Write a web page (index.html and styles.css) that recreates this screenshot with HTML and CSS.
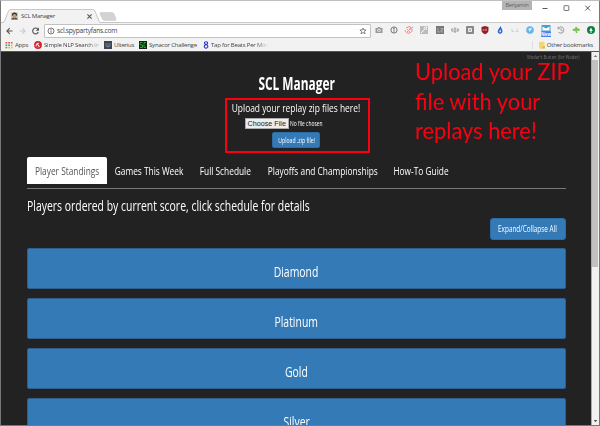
FILE: index.html
```html
<!DOCTYPE html>
<html lang="en">
<head>
<meta charset="utf-8">
<title>SCL Manager</title>
<link rel="stylesheet" href="styles.css">
</head>
<body>
<div class="window">
  <header class="titlebar">
    <div class="tab">
      <svg class="tab-shape" viewBox="0 0 117 14"><path d="M0 13.6H1.500Q3 13.500 3.500 12L7.500 2Q8 .5 10 .5H91.500Q93.500 .5 94 2L98 12Q98.500 13.600 100 13.600H117V14H0Z" fill="#f2f2f2"/><path d="M0 13.500H1.500Q3 13.500 3.500 12L7.500 2Q8 .5 10 .5H91.500Q93.500 .5 94 2L98 12Q98.500 13.500 100 13.500H117" fill="none" stroke="#bbb" stroke-width=".8"/><path d="M99.500 3.500H111Q112.500 3.500 113 5L115 10Q115.300 11.500 114 11.500H103.500Q102 11.500 101.500 10L99 5Q98.700 3.500 99.500 3.500Z" fill="#d3d3d3" stroke="#c2c2c2" stroke-width=".5"/></svg>
      <svg class="favicon" viewBox="0 0 8 8"><path fill="#d0c8b4" d="M0 0h8v8H0z"/><path fill="#3c3027" d="M1 3Q1 0 4 0Q7 0 7 3L6 4L5 2H3L2 4Z"/><path fill="#c79579" d="M2 2.500h4v3L4 7 2 5.500z"/><path fill="#4b4545" d="M0 8Q1 6 3 6L4 7 5 6Q7 6 8 8Z"/></svg>
      <span class="tab-title">SCL Manager</span>
      <svg class="tab-close" viewBox="0 0 6 6"><path d="M1.200 1.200 4.800 4.800M4.800 1.200 1.200 4.800" stroke="#555" stroke-width=".9"/></svg>
    </div>
    <span class="user">Benjamin</span>
    <svg class="controls" viewBox="0 0 66 14"><path d="M10.500 7.500h5M53.300 4.700l4.800 4.800M58.100 4.700l-4.800 4.800" stroke="#444" fill="none" stroke-width=".9"/><rect x="32" y="4.700" width="4.800" height="4.800" rx=".5" stroke="#555" fill="none" stroke-width=".8"/></svg>
  </header>

  <div class="toolbar">
    <svg class="nav" viewBox="0 0 40 14"><g fill="none" stroke-width="1.100"><path d="M11.500 7H6M8.700 4.200 5.900 7l2.800 2.800" stroke="#555"/><path d="M18.500 7H24M21.300 4.200 24.100 7l-2.800 2.800" stroke="#ccc"/><path d="M36.800 5.100A2.900 2.900 0 1 0 37.300 8" stroke="#555"/></g><path d="M38 3.500v3.200h-3.200z" fill="#555"/></svg>
    <div class="omnibox">
      <svg class="info" viewBox="0 0 8 8"><circle cx="4" cy="4" r="3" fill="none" stroke="#555" stroke-width=".8"/><path d="M4 3.500v2.300M4 2v.9" stroke="#555" stroke-width=".9"/></svg>
      <span class="url">scl.spypartyfans.com</span>
      <svg class="star" viewBox="0 0 8 8"><path d="m4 1 .9 2h2.200L5.400 4.500 6 6.800 4 5.500 2 6.800l.6-2.300L.9 3h2.200z" fill="none" stroke="#555" stroke-width=".7"/></svg>
    </div>
    <div class="extensions">
      <svg viewBox="0 0 10 10"><path d="M1.500 3h2l.5-1h2l.5 1h2v5h-7z" fill="#999"/><circle cx="5" cy="5.300" r="1.700" fill="#eee"/><circle cx="5" cy="5.300" r=".9" fill="#999"/></svg>
      <svg viewBox="0 0 10 10"><circle cx="5" cy="5" r="3.100" fill="none" stroke="#777"/><path d="M5 2.500v5M4.200 3.500h1" stroke="#777" stroke-width=".9"/></svg>
      <svg viewBox="0 0 10 10"><path d="M2 3Q5 0 8 3L9 2M1 5Q2 9 6 8M3 4l4 4M7 3 3 7M5 4h3v3" fill="none" stroke="#e69090"/></svg>
      <svg viewBox="0 0 10 10"><path fill="#bbb" d="M1 1h8v8H1z"/><path d="m2 8 4-4M5 3.500a1.700 1.700 0 0 1 3-1L6.800 4 8 4.200" fill="none" stroke="#fff"/></svg>
      <svg viewBox="0 0 10 10"><path fill="#777" d="M1 1h8v8H1z"/><path d="M3 3v4M2.500 7H5M5.500 3.500H8V5H6v2h2" stroke="#bbb" stroke-width=".7" fill="none"/></svg>
      <svg viewBox="0 0 10 10"><path fill="#aaa" d="M1 4 3 3v4L1 6zM3.500 4 5 2l1.500 2v3L5 8 3.500 7zM7 3l2 1v2L7 7z"/><path stroke="#eee" stroke-width=".6" d="M2 5h6"/></svg>
      <svg viewBox="0 0 10 10"><rect x="1" y="1" width="8" height="8" rx="1" fill="#888"/><rect x="3" y="3" width="4" height="4" rx="1" fill="#eee"/><path d="M4.300 4.300h1.500v1.500H4.300z" fill="#888"/></svg>
      <svg viewBox="0 0 10 10"><path fill="#921f25" d="M5 1 8.500 2v3Q8.500 8 5 9.200 1.500 8 1.500 5V2z"/><path d="M3 4v1.500h1V4M5.200 4h1.300v1.500H5.200z" stroke="#e0afaf" stroke-width=".5" fill="none"/></svg>
      <svg viewBox="0 0 10 10"><path fill="#2867d6" d="M5.500 1 7.300 5Q8 8.500 5 8.800 2.200 8.500 2.800 5.500z"/><path fill="#e0edff" d="M5.300 4.500 6 6Q6 7.500 5 7.400 4 7.300 4.400 6z"/></svg>
      <svg viewBox="0 0 10 10"><path d="M2 4v2.500h1.700M5 6.500h.8M7 4v2.500h1.500" fill="none" stroke="#ccc"/></svg>
      <svg viewBox="0 0 10 10"><circle cx="5" cy="5" r="3.800" fill="#5fb4e8"/><path d="m2 4 2 .5.5 2.500 3-4.500-2.700 1z" fill="#e4f4ff"/></svg>
      <svg class="new-badge" viewBox="0 0 10 12"><path fill="#4b9dce" d="M.5 0h9v7h-9z"/><path fill="#fff" d="m1.500 1.500 3.500 2 3.500-2v4h-7z"/><path fill="#4384ee" d="M0 6.500h10V12H0z"/><text x="5" y="10.800" text-anchor="middle">New</text></svg>
      <svg viewBox="0 0 10 10"><path d="M2.200 3.200A3.100 3.100 0 1 1 2.500 7.200M2 1.800v2h2M5 3.200V5l1.500 1" fill="none" stroke="#aaa" stroke-width="1.100"/></svg>
      <svg viewBox="0 0 10 10"><path d="m5 1.500 2 2 2 .5-.7 2-2.500-.3.700 2.300H5l-.8-2.300L2 6 1.500 4l2-.2z" fill="#78c34f"/></svg>
      <svg viewBox="0 0 10 10"><circle cx="5" cy="5" r="4" fill="#0b8043"/><path d="M5 2.500 6.700 6H3.300zM4 6.400h2v1H4z" fill="#fff"/></svg>
    </div>
  </div>

  <nav class="bookmarks">
    <svg class="ic apps" viewBox="0 0 8 8"><path fill="#e35645" d="M.5 1h1.800v1.600H.5zM3.200 1H5v1.600H3.200zM5.900 1h1.600v1.600H5.900z"/><path fill="#4caf50" d="M.5 3.400h1.800V5H.5z"/><path fill="#4b86e8" d="M3.200 3.400H5V5H3.200z"/><path fill="#f2bf30" d="M5.900 3.400h1.600V5H5.900zM3.200 5.800H5v1.600H3.200zM5.900 5.800h1.600v1.600H5.900z"/><path fill="#4caf50" d="M.5 5.800h1.800v1.600H.5z"/></svg><span class="b1">Apps</span>
    <svg class="ic" viewBox="0 0 8 8"><circle cx="4" cy="4" r="3.900" fill="#d2222d"/><path d="M2 5.500Q1.700 2 4.500 2L3.500 4l2 1-1.500 1.500" fill="none" stroke="#fff" stroke-width=".9"/></svg><span class="b2 fade">Simple NLP Search in</span>
    <svg class="ic" viewBox="0 0 8 8"><path fill="#3d4452" d="M0 0h8v8H0z"/><path d="M2 2v3q2 2 4 0V2M4 2v4" fill="none" stroke="#8a95a8" stroke-width=".7"/></svg><span class="b3">Ulterius</span>
    <svg class="ic" viewBox="0 0 8 8"><path fill="#10240f" d="M0 0h8v8H0z"/><path d="M3.500 1.500H1.200V4h2.300v2.500H1M7 1.500H5v5h2" fill="none" stroke="#2ca336"/></svg><span class="b4">Synacor Challenge</span>
    <svg class="ic" viewBox="0 0 8 8"><path d="M4 .8q1.800 0 1.500 1.700L4.500 3.800 3 3 2.500 2Q2.500.8 4 .8M4.500 3.800q2 1.200 1 2.500-1.500 1.500-3 0-.7-1.300.8-2.500z" fill="none" stroke="#3138cf" stroke-width="1.100"/></svg><span class="b5 fade">Tap for Beats Per Minu</span>
    <span class="other"><svg class="folder" viewBox="0 0 8 8"><path fill="#f5d76f" d="M1 .8h5.500v6.700H1z"/><path fill="#e6bd4d" d="M5 5h2v2.500H3z"/></svg><span>Other bookmarks</span></span>
  </nav>

  <div class="viewport">
    <main class="page">
      <div class="corner"><span class="narrow">Wodar's Button (for Wodar)</span></div>
      <h1><span class="narrow">SCL Manager</span></h1>
      <section class="upload">
        <p class="upload-title"><span class="narrow">Upload your replay zip files here!</span></p>
        <div class="file"><button class="choose">Choose File</button><span class="narrow">No file chosen</span></div>
        <button class="submit"><span class="narrow">Upload .zip file!</span></button>
      </section>
      <nav class="tabs">
        <a class="t1 active"><span class="narrow">Player Standings</span></a>
        <a class="t2"><span class="narrow">Games This Week</span></a>
        <a class="t3"><span class="narrow">Full Schedule</span></a>
        <a class="t4"><span class="narrow">Playoffs and Championships</span></a>
        <a class="t5"><span class="narrow">How-To Guide</span></a>
      </nav>
      <p class="lead"><span class="narrow">Players ordered by current score, click schedule for details</span></p>
      <div class="actions"><button class="expand"><span class="narrow">Expand/Collapse All</span></button></div>
      <div class="divisions">
        <div class="division"><span class="narrow">Diamond</span></div>
        <div class="division"><span class="narrow">Platinum</span></div>
        <div class="division"><span class="narrow">Gold</span></div>
        <div class="division"><span class="narrow">Silver</span></div>
      </div>
    </main>
    <aside class="scrollbar">
      <svg viewBox="0 0 7 8"><path d="M1.700 5 3.500 3 5.300 5z" fill="#777"/></svg>
      <div class="thumb"></div>
      <svg class="down" viewBox="0 0 7 8"><path d="M1.700 3 3.500 5.300 5.300 3z" fill="#555"/></svg>
    </aside>
  </div>
  <div class="annotation">Upload your ZIP<br>file with your<br>replays here!</div>
</div>
</body>
</html>
```

FILE: styles.css
```css
* { box-sizing: border-box; }
body { margin: 0; overflow: hidden; font-family: "Open Sans", "Noto Sans", sans-serif; }
h1, p { margin: 0; font-weight: 400; }
button { padding: 0; font-family: inherit; cursor: pointer; }
svg { display: block; flex: none; }

.window {
  position: relative;
  display: flex;
  flex-direction: column;
  width: 600px;
  height: 426px;
  border: 1px solid #777;
  border-top-color: #c0c0c0;
  background: #fff;
}

.titlebar { display: flex; height: 22px; align-items: flex-start; border-bottom: 1px solid #c9c9c9; }
.tab { position: relative; display: flex; align-items: center; width: 117px; height: 14px; margin-top: 8px; padding-left: 10px; color: #444; }
.tab-shape { position: absolute; left: 0; top: 0; width: 117px; height: 14px; }
.favicon, .tab-title, .tab-close { position: relative; }
.favicon { width: 7px; height: 8px; }
.tab-title { width: 65px; margin-left: 3px; line-height: 10px; white-space: nowrap; font-size: 6.100px; letter-spacing: -.3px; }
.tab-close { width: 7px; height: 7px; }
.user { width: 30px; height: 9px; margin-left: 384px; background: #b4b4b4; color: #666; font-size: 5.800px; letter-spacing: -.3px; line-height: 9px; text-align: center; }
.controls { width: 66px; height: 14px; }

.toolbar { display: flex; height: 16px; background: #f2f2f2; align-items: center; }
.nav { width: 40px; height: 14px; margin-right: 3px; }
.omnibox { display: flex; align-items: center; width: 327px; height: 14px; padding: 0 3px 0 2px; border: 1px solid #c2c2c2; border-radius: 1px; background: #fff; }
.info { width: 8px; height: 8px; margin-right: 2px; }
.url { flex: 1; font-size: 6.700px; letter-spacing: -.25px; line-height: 10px; color: #444; }
.star { width: 8px; height: 8px; }
.extensions { display: flex; gap: 5.150px; margin-left: 3px; }
.extensions svg { width: 10px; height: 10px; overflow: visible; }
.extensions .new-badge { height: 12px; }
.new-badge text { font-size: 4.500px; font-weight: 700; fill: #fff; }

.bookmarks { display: flex; flex: none; align-items: center; height: 12px; padding-left: 4px; background: #f2f2f2; color: #444; font-size: 6.100px; letter-spacing: -.25px; line-height: 10px; white-space: nowrap; }
.ic { width: 8px; height: 8px; margin-right: 2px; }
.b1 { width: 19px; }
.b2 { width: 60px; }
.b3 { width: 25px; }
.b4 { width: 53px; }
.b5 { width: 60px; margin-left: -1px; }
.fade { -webkit-mask-image: linear-gradient(90deg, #000 75%, transparent 95%); mask-image: linear-gradient(90deg, #000 75%, transparent 95%); }
.other { display: flex; align-items: center; height: 8px; margin: 0 6px 0 auto; padding-left: 5px; border-left: 1px solid #ddd; }
.folder { width: 8px; height: 8px; margin-right: 1px; }

.viewport { display: flex; flex: 1; min-height: 0; overflow: hidden; background: #222; border-top: 1px solid #555; }
.page { flex: 1; min-width: 0; padding: 0 25.500px 0 26px; color: #fff; }
.scrollbar { display: flex; flex-direction: column; width: 8px; border-left: 1px solid #aaa; background: #f1f1f1; }
.scrollbar svg { width: 7px; height: 8px; }
.thumb { width: 6px; height: 207px; background: #c1c1c1; }
.down { margin-top: auto; }

/* Condensed lettering used throughout the page */
.narrow { display: inline-block; flex: none; white-space: nowrap; transform: scaleX(.745); }

.corner { display: flex; justify-content: flex-end; height: 20px; margin-right: -14px; font-size: 5.500px; line-height: 11px; color: #777; }
.corner .narrow { transform-origin: right; }
h1 { display: flex; justify-content: center; height: 26px; font-size: 17px; line-height: 23px; font-weight: 700; }
h1 .narrow { transform: scaleX(.7); }

.upload { display: flex; flex-direction: column; align-items: center; width: 145px; height: 55px; margin: 0 auto; border: 2px solid #fb0013; position: relative; left: 1px; }
.upload-title { display: flex; justify-content: center; height: 18px; margin-left: -2px; font-size: 11.500px; line-height: 15px; }
.upload-title .narrow { transform: scaleX(.73); }
.file { display: flex; align-items: center; width: 105px; height: 11px; font-size: 6.600px; }
.choose { width: 44px; height: 11px; margin-right: 1px; border: 1px solid #aaa; background: #eee; color: #222; font: 7.200px/9px "Liberation Sans", sans-serif; white-space: nowrap; }
.file .narrow { transform-origin: left; }
.submit { display: flex; align-items: center; justify-content: center; width: 48px; height: 16px; margin: 3px 2px 0 0; border: 1px solid #2e6da4; border-radius: 2px; background: #337ab7; color: #fff; font-size: 6.900px; }

.tabs { display: flex; height: 32px; margin-top: 4px; border-bottom: 1px solid #777; }
.tabs a { display: flex; height: 27px; align-items: center; justify-content: center; border-radius: 2px 2px 0 0; font-size: 11.200px; }
.tabs .active { background: #fff; color: #555; }
.t1 { width: 80px; }
.t2 { width: 85px; }
.t3 { width: 67px; }
.t4 { width: 127px; }
.t5 { width: 69px; }

.lead { height: 29px; font-size: 14px; line-height: 34px; }
.lead .narrow { transform-origin: left; }
.actions { display: flex; justify-content: flex-end; }
.expand { display: flex; align-items: center; justify-content: center; width: 76px; height: 22px; border: 1px solid #2e6da4; border-radius: 3px; background: #337ab7; color: #fff; font-size: 8.600px; }
.divisions { display: flex; flex-direction: column; gap: 9px; margin-top: 8px; }
.division { display: flex; flex: none; align-items: center; justify-content: center; height: 41px; padding-top: 6px; border: 1px solid #2e5f8d; border-radius: 2px; background: #337ab7; font-size: 14px; }

.annotation { position: absolute; left: 414px; top: 55px; color: #fb0013; font: 24px/29.500px Lato, sans-serif; white-space: nowrap; transform: scaleX(.91); transform-origin: left; }
```
